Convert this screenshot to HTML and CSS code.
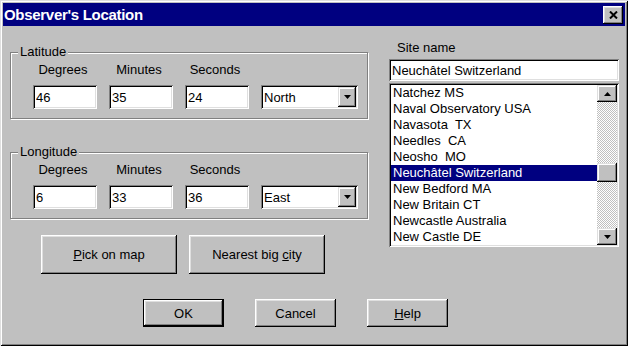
FILE: index.html
```html
<!DOCTYPE html>
<html lang="en">
<head>
    <meta charset="UTF-8">
    <title>Observer's Location</title>
    <link rel="stylesheet" href="styles.css">
</head>
<body>
    <div class="window">
        <div class="titlebar">
            <span class="title">Observer's Location</span>
            <button class="close" title="Close">
                <svg width="9" height="8" viewBox="0 0 9 8"><path d="M1 0.5 L8 7.5 M8 0.5 L1 7.5" stroke="#000" stroke-width="2" fill="none"/></svg>
            </button>
        </div>
        <div class="client">
            <div class="main">
                <div class="left">
                    <fieldset class="group">
                        <legend>Latitude</legend>
                        <div class="coords">
                            <div class="field"><label>Degrees</label><input class="edit" value="46"></div>
                            <div class="field"><label>Minutes</label><input class="edit" value="35"></div>
                            <div class="field"><label>Seconds</label><input class="edit" value="24"></div>
                            <div class="combo">
                                <span class="combo-value">North</span>
                                <span class="drop"><svg width="7" height="4" viewBox="0 0 7 4"><polygon points="0,0 7,0 3.5,4" fill="#000"/></svg></span>
                            </div>
                        </div>
                    </fieldset>
                    <fieldset class="group second">
                        <legend>Longitude</legend>
                        <div class="coords">
                            <div class="field"><label>Degrees</label><input class="edit" value="6"></div>
                            <div class="field"><label>Minutes</label><input class="edit" value="33"></div>
                            <div class="field"><label>Seconds</label><input class="edit" value="36"></div>
                            <div class="combo">
                                <span class="combo-value">East</span>
                                <span class="drop"><svg width="7" height="4" viewBox="0 0 7 4"><polygon points="0,0 7,0 3.5,4" fill="#000"/></svg></span>
                            </div>
                        </div>
                    </fieldset>
                    <div class="actions">
                        <button class="btn big"><u>P</u>ick on map</button>
                        <button class="btn big">Nearest big <u>c</u>ity</button>
                    </div>
                </div>
                <div class="right">
                    <label class="site-label">Site name</label>
                    <input class="edit site" value="Neuchâtel Switzerland">
                    <div class="listbox">
                        <ul class="items">
                            <li>Natchez MS</li>
                            <li>Naval Observatory USA</li>
                            <li>Navasota&nbsp; TX</li>
                            <li>Needles&nbsp; CA</li>
                            <li>Neosho&nbsp; MO</li>
                            <li class="selected">Neuchâtel Switzerland</li>
                            <li>New Bedford MA</li>
                            <li>New Britain CT</li>
                            <li>Newcastle Australia</li>
                            <li>New Castle DE</li>
                        </ul>
                        <div class="scrollbar">
                            <span class="sb-btn"><svg width="7" height="4" viewBox="0 0 7 4"><polygon points="0,4 7,4 3.5,0" fill="#000"/></svg></span>
                            <span class="track-top"></span>
                            <span class="thumb"></span>
                            <span class="track-rest"></span>
                            <span class="sb-btn"><svg width="7" height="4" viewBox="0 0 7 4"><polygon points="0,0 7,0 3.5,4" fill="#000"/></svg></span>
                        </div>
                    </div>
                </div>
            </div>
            <div class="footer">
                <button class="btn small default">OK</button>
                <button class="btn small">Cancel</button>
                <button class="btn small"><u>H</u>elp</button>
            </div>
        </div>
    </div>
</body>
</html>
```

FILE: styles.css
```css
* {
    box-sizing: border-box;
}
body {
    margin: 0;
    background-color: #c0c0c0;
    font-family: "Liberation Sans", Arial, sans-serif;
    font-size: 13px;
    color: #000;
}
.window {
    width: 628px;
    height: 346px;
    padding: 3px;
    background-color: #c0c0c0;
    display: flex;
    flex-direction: column;
    box-shadow: inset 1px 1px #dfdfdf, inset -1px -1px #000, inset 2px 2px #fff, inset -2px -2px #808080;
}

/* title bar */
.titlebar {
    height: 23px;
    background-color: #000080;
    color: #fff;
    display: flex;
    align-items: center;
    justify-content: space-between;
    padding: 0 2px 0 1px;
}
.title {
    font-weight: bold;
    font-size: 15px;
    letter-spacing: -0.3px;
}
.close {
    width: 20px;
    height: 18px;
    padding: 0;
    border: none;
    background-color: #c0c0c0;
    display: flex;
    align-items: center;
    justify-content: center;
    box-shadow: inset -1px -1px #000, inset 1px 1px #fff, inset -2px -2px #808080, inset 2px 2px #dfdfdf;
}

/* body of the dialog */
.client {
    flex: 1;
    display: flex;
    flex-direction: column;
}
.main {
    display: flex;
    gap: 21px;
    padding-left: 7px;
}
.left {
    width: 358px;
    display: flex;
    flex-direction: column;
    padding-top: 18px;
}
.group {
    margin: 0;
    min-width: 0;
    padding: 2px 9px 9px 7px;
    border: 1px solid #808080;
    box-shadow: 1px 1px 0 #fff, inset 1px 1px 0 #fff;
}
.group legend {
    padding: 0 2px;
    line-height: 16px;
    background-color: #c0c0c0;
}
.group.second {
    margin-top: 25px;
}
.coords {
    display: flex;
    align-items: flex-end;
    gap: 12px;
    padding-left: 15px;
}
.field {
    width: 64px;
    display: flex;
    flex-direction: column;
    align-items: center;
    gap: 7px;
}
.field label {
    line-height: 16px;
    padding-right: 4px;
}

/* sunken edit boxes */
.edit {
    width: 64px;
    height: 24px;
    border: none;
    padding: 0 3px;
    font: inherit;
    color: #000;
    background-color: #fff;
    outline: none;
    box-shadow: inset 1px 1px #808080, inset -1px -1px #fff, inset 2px 2px #000, inset -2px -2px #dfdfdf;
}
.combo {
    width: 97px;
    height: 24px;
    padding: 2px;
    display: flex;
    align-items: center;
    justify-content: space-between;
    background-color: #fff;
    box-shadow: inset 1px 1px #808080, inset -1px -1px #fff, inset 2px 2px #000, inset -2px -2px #dfdfdf;
}
.combo-value {
    padding-left: 1px;
}
.drop, .sb-btn {
    width: 18px;
    height: 20px;
    display: flex;
    align-items: center;
    justify-content: center;
    background-color: #c0c0c0;
    box-shadow: inset -1px -1px #000, inset 1px 1px #dfdfdf, inset -2px -2px #808080, inset 2px 2px #fff;
}

/* push buttons */
.btn {
    padding: 0;
    border: none;
    font: inherit;
    color: #000;
    background-color: #c0c0c0;
    box-shadow: inset -1px -1px #000, inset 1px 1px #fff, inset -2px -2px #808080, inset 2px 2px #dfdfdf;
}
.btn.default {
    box-shadow: inset 0 0 0 1px #000, inset -2px -2px #000, inset 2px 2px #fff, inset -3px -3px #808080, inset 3px 3px #dfdfdf;
}
.actions {
    display: flex;
    gap: 12px;
    padding-left: 31px;
    margin-top: 16px;
}
.btn.big {
    width: 136px;
    height: 39px;
}
.footer {
    display: flex;
    gap: 31px;
    padding-left: 140px;
    margin-top: 25px;
}
.btn.small {
    width: 81px;
    height: 28px;
}

/* site list */
.right {
    width: 230px;
    display: flex;
    flex-direction: column;
    padding-top: 14px;
}
.site-label {
    line-height: 16px;
    padding-left: 8px;
}
.edit.site {
    width: 230px;
    height: 22px;
    margin-top: 3px;
}
.listbox {
    height: 164px;
    margin-top: 2px;
    padding: 2px;
    display: flex;
    background-color: #fff;
    box-shadow: inset 1px 1px #808080, inset -1px -1px #fff, inset 2px 2px #000, inset -2px -2px #dfdfdf;
}
.items {
    flex: 1;
    list-style: none;
    margin: 0;
    padding: 0;
}
.items li {
    height: 16px;
    line-height: 16px;
    padding-left: 2px;
    white-space: nowrap;
}
.items li.selected {
    background-color: #000080;
    color: #fff;
}
.scrollbar {
    width: 20px;
    display: flex;
    flex-direction: column;
    background-color: #c0c0c0;
    background-image: conic-gradient(#fff 25%, #c0c0c0 0 50%, #fff 0 75%, #c0c0c0 0);
    background-size: 2px 2px;
}
.sb-btn {
    width: 20px;
    height: 17px;
    flex-shrink: 0;
}
.track-top {
    height: 61px;
}
.thumb {
    height: 19px;
    background-color: #c0c0c0;
    box-shadow: inset -1px -1px #000, inset 1px 1px #dfdfdf, inset -2px -2px #808080, inset 2px 2px #fff;
}
.track-rest {
    flex: 1;
}
```
